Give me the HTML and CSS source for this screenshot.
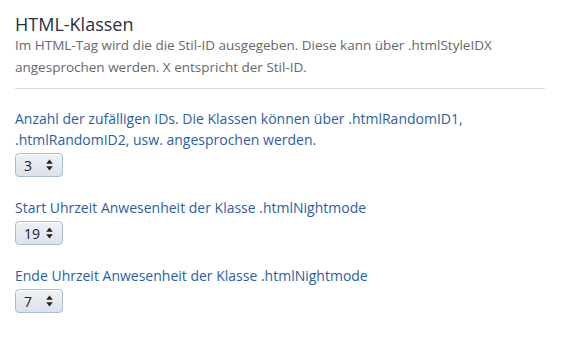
FILE: index.html
```html
<!DOCTYPE html>
<html lang="de">
<head>
<meta charset="utf-8">
<link rel="stylesheet" href="styles.css">
</head>
<body>
<section class="panel">
  <h3 class="title">HTML-Klassen</h3>
  <p class="desc">Im HTML-Tag wird die die Stil-ID ausgegeben. Diese kann über .htmlStyleIDX angesprochen werden. X entspricht der Stil-ID.</p>
  <hr class="sep">
  <div class="field first">
    <label class="label">Anzahl der zufälligen IDs. Die Klassen können über .htmlRandomID1, .htmlRandomID2, usw. angesprochen werden.</label>
    <div class="select"><span class="val">3</span><svg class="arrows" width="7" height="12" viewBox="0 0 7 12"><path d="M3.5 0.5 L6.8 4.8 L0.2 4.8 Z M3.5 11.5 L6.8 7.2 L0.2 7.2 Z" fill="#222"/></svg></div>
  </div>
  <div class="field">
    <label class="label">Start Uhrzeit Anwesenheit der Klasse .htmlNightmode</label>
    <div class="select"><span class="val">19</span><svg class="arrows" width="7" height="12" viewBox="0 0 7 12"><path d="M3.5 0.5 L6.8 4.8 L0.2 4.8 Z M3.5 11.5 L6.8 7.2 L0.2 7.2 Z" fill="#222"/></svg></div>
  </div>
  <div class="field">
    <label class="label">Ende Uhrzeit Anwesenheit der Klasse .htmlNightmode</label>
    <div class="select"><span class="val">7</span><svg class="arrows" width="7" height="12" viewBox="0 0 7 12"><path d="M3.5 0.5 L6.8 4.8 L0.2 4.8 Z M3.5 11.5 L6.8 7.2 L0.2 7.2 Z" fill="#222"/></svg></div>
  </div>
</section>
</body>
</html>
```
FILE: styles.css
```css
html, body {
  margin: 0;
  padding: 0;
  background: #fff;
}
body {
  font-family: "Open Sans", "Noto Sans", sans-serif;
  font-size: 13px;
}
.panel {
  width: 530px;
  padding: 14px 0 0 15px;
}
.title {
  margin: 0;
  font-size: 18px;
  font-weight: 400;
  line-height: 20px;
  color: #27313d;
}
.desc {
  margin: 0;
  font-size: 13.5px;
  line-height: 22px;
  color: #686868;
}
.sep {
  margin: 10px 0 0;
  border: 0;
  border-top: 1px solid #dcdcdc;
  height: 0;
}
.field {
  display: flex;
  flex-direction: column;
  align-items: flex-start;
  margin-top: 20px;
}
.field.first {
  margin-top: 19px;
}
.label {
  font-size: 14px;
  line-height: 21px;
  color: #2c5ea6;
  margin-bottom: 3px;
}
.select {
  box-sizing: border-box;
  width: 48px;
  height: 24px;
  display: flex;
  align-items: center;
  justify-content: space-between;
  padding: 0 9px 0 8px;
  border: 1px solid #a9bdd3;
  border-radius: 4px;
  background: linear-gradient(#eef2f6, #dce2e9);
  box-shadow: inset 0 1px 0 #fff;
  color: #222;
  font-size: 14px;
}
.arrows {
  display: block;
}
```
